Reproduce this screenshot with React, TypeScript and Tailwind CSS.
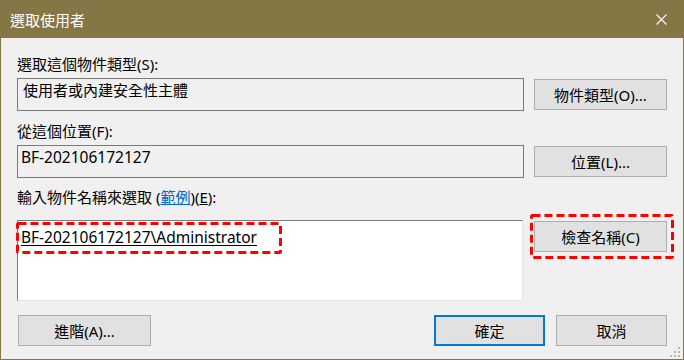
import React from "react";

function Btn({ children, className = "" }: { children: React.ReactNode; className?: string }) {
  return (
    <div
      className={
        "flex h-[31px] items-center justify-center bg-[#e1e1e1] text-[15px] leading-[20px] text-black " +
        className
      }
    >
      {children}
    </div>
  );
}

function DashBox({ w, h }: { w: number; h: number }) {
  return (
    <svg width={w} height={h} className="block">
      <rect
        x={1.5}
        y={1.5}
        width={w - 3}
        height={h - 3}
        fill="none"
        stroke="#ff0000"
        strokeWidth={3}
        strokeDasharray="8 4"
        rx={1}
      />
    </svg>
  );
}

export default function App() {
  return (
    <div className="relative flex h-[360px] w-[684px] flex-col border border-[#857645] bg-[#f0f0f0] font-['Noto_Sans','Noto_Sans_CJK_TC',sans-serif] text-black">
      {/* Title bar */}
      <div className="flex h-[37px] shrink-0 items-center justify-between bg-[#857645] pl-[9px] pr-[16px]">
        <span className="text-[15px] leading-[20px] text-white">選取使用者</span>
        <svg width="11" height="11" viewBox="0 0 11 11" className="block">
          <path d="M0.5 0.5 L10.5 10.5 M10.5 0.5 L0.5 10.5" stroke="#ffffff" strokeWidth="1.1" fill="none" />
        </svg>
      </div>

      {/* Body */}
      <div className="flex flex-1 flex-col pl-[16px] pr-[16px] pt-[16px]">
        <div className="text-[15px] leading-[20px]">選取這個物件類型(S):</div>
        <div className="mt-[4px] flex items-center gap-[10px]">
          <div className="h-[33px] flex-1 border border-[#7a7a7a] pl-[5px] pt-[1px] text-[15px] leading-[20px]">
            使用者或內建安全性主體
          </div>
          <Btn className="w-[133px] border border-[#adadad]">物件類型(O)...</Btn>
        </div>

        <div className="mt-[10px] text-[15px] leading-[20px]">從這個位置(F):</div>
        <div className="mt-[4px] flex items-center gap-[10px]">
          <div className="h-[33px] flex-1 border border-[#7a7a7a] pl-[3px] pt-[1px] text-[15.5px] leading-[20px]">
            BF-202106172127
          </div>
          <Btn className="w-[133px] border border-[#adadad]">位置(L)...</Btn>
        </div>

        <div className="mt-[9px] text-[15px] leading-[20px]">
          輸入物件名稱來選取 (<span className="text-[#0066cc] underline">範例</span>)(<span className="underline">E</span>):
        </div>
        <div className="mt-[13px] flex items-start gap-[11px]">
          <div className="relative h-[81px] flex-1 border-b border-l border-r border-t border-b-[#e3e3e3] border-l-[#7a7a7a] border-r-[#e3e3e3] border-t-[#7a7a7a] bg-white pl-[3px] pt-[6px] text-[15.5px] leading-[20px]">
            <span className="underline underline-offset-[2px]">BF-202106172127\Administrator</span>
            <div className="absolute left-[-2px] top-[1px]">
              <DashBox w={266} h={32} />
            </div>
          </div>
          <div className="relative mt-[1px]">
            <Btn className="w-[133px] border border-[#adadad]">檢查名稱(C)</Btn>
            <div className="absolute left-[-4px] top-[-7px]">
              <DashBox w={144} h={45} />
            </div>
          </div>
        </div>

        <div className="mt-[14px] flex items-center">
          <Btn className="ml-[1px] w-[133px] border border-[#adadad]">進階(A)...</Btn>
          <div className="flex-1" />
          <Btn className="w-[111px] border-2 border-[#0078d7]">確定</Btn>
          <Btn className="ml-[11px] w-[111px] border border-[#adadad]">取消</Btn>
        </div>
      </div>

      {/* Size grip */}
      <svg width="12" height="12" viewBox="0 0 12 12" className="absolute bottom-[1px] right-[2px] block">
        <rect x="9" y="1" width="2" height="2" fill="#b8b8b8" />
        <rect x="5" y="5" width="2" height="2" fill="#b8b8b8" />
        <rect x="9" y="5" width="2" height="2" fill="#b8b8b8" />
        <rect x="1" y="9" width="2" height="2" fill="#b8b8b8" />
        <rect x="5" y="9" width="2" height="2" fill="#b8b8b8" />
        <rect x="9" y="9" width="2" height="2" fill="#b8b8b8" />
      </svg>
    </div>
  );
}
